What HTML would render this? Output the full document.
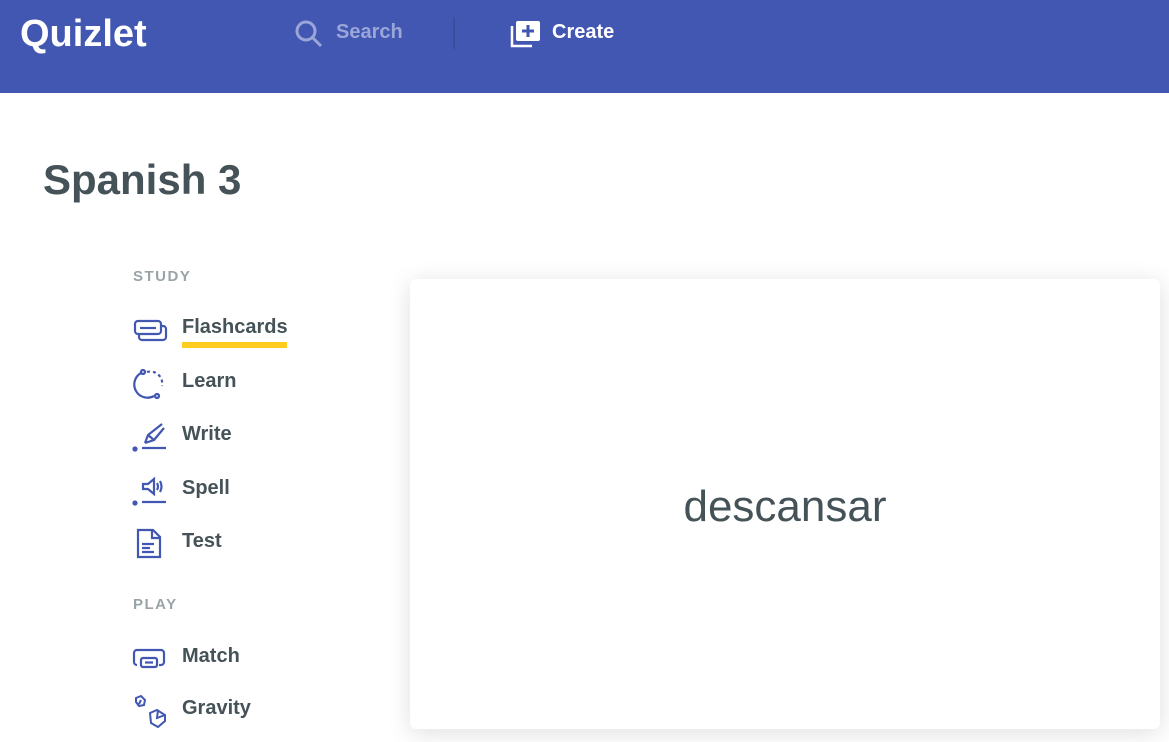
<!DOCTYPE html>
<html><head><meta charset="utf-8"><style>
*{margin:0;padding:0;box-sizing:border-box}
body{width:1169px;height:742px;overflow:hidden;background:#fff;font-family:"Liberation Sans",sans-serif;position:relative}
.hdr{position:absolute;left:0;top:0;width:1169px;height:93px;background:#4257b2}
.logo{position:absolute;left:20px;top:13px;color:#fff;font-weight:bold;font-size:38px;letter-spacing:0px}
.search{position:absolute;left:336px;top:21px;color:#9aa6d8;font-size:20px;font-weight:bold}
.div{position:absolute;left:453px;top:17px;width:2px;height:32px;background:#3a4d9f}
.create{position:absolute;left:552px;top:21px;color:#fff;font-size:20px;font-weight:bold}
h1{position:absolute;left:43px;top:156px;font-size:42px;color:#455358;font-weight:bold}
.sec{position:absolute;left:133px;font-size:15px;font-weight:bold;letter-spacing:1.5px;color:#99a3a8}
.item{position:absolute;left:182px;font-size:20px;color:#455358;font-weight:bold}
.ic{position:absolute;left:132px}
.ul{position:absolute;left:182px;top:342px;width:105px;height:6px;background:#ffcd1f}
.card{position:absolute;left:410px;top:279px;width:750px;height:450px;background:#fff;border-radius:6px;box-shadow:0 4px 24px rgba(0,0,0,0.13)}
.word{position:absolute;left:410px;width:750px;top:482px;text-align:center;font-size:44px;color:#455358}
</style></head><body>
<div class="hdr">
<div class="logo">Quizlet</div>
<svg style="position:absolute;left:294px;top:19px" width="30" height="30" viewBox="0 0 30 30" fill="none" stroke="#9aa6d8" stroke-width="3"><circle cx="12" cy="12" r="9"/><path d="M18.5 18.5L27 27"/></svg>
<div class="search">Search</div>
<div class="div"></div>
<svg style="position:absolute;left:510px;top:20px" width="32" height="28" viewBox="0 0 32 28"><path d="M2 6v20h20" fill="none" stroke="#fff" stroke-width="2.5"/><rect x="6" y="1" width="24" height="20" rx="2" fill="#fff"/><path d="M18 5v12M12 11h12" stroke="#4257b2" stroke-width="3"/></svg>
<div class="create">Create</div>
</div>
<h1>Spanish 3</h1>
<div class="sec" style="top:268px">STUDY</div>
<div class="sec" style="top:596px">PLAY</div>
<svg class="ic" style="top:316px" width="36" height="28" viewBox="0 0 36 28" fill="none" stroke="#4257b2" stroke-width="2.2"><rect x="3" y="5" width="26" height="13" rx="3"/><path d="M7 18v3a3 3 0 0 0 3 3h21a3 3 0 0 0 3-3v-8a3 3 0 0 0-3-3h-2"/><path d="M8 12h16"/></svg>
<div class="item" style="top:316px">Flashcards</div><div class="ul"></div>
<svg class="ic" style="top:368px" width="36" height="32" viewBox="0 0 36 32" fill="none" stroke="#4257b2" stroke-width="2.2"><path d="M9 5A12 12 0 0 0 22 28"/><path d="M15 4A12 12 0 0 1 30 18" stroke-dasharray="3 3"/><circle cx="11" cy="4" r="2"/><circle cx="25" cy="28" r="2"/></svg>
<div class="item" style="top:370px">Learn</div>
<svg class="ic" style="top:420px" width="36" height="34" viewBox="0 0 36 34" fill="none" stroke="#4257b2" stroke-width="2.2"><path d="M10 28h24"/><circle cx="3" cy="29" r="1.5" fill="#4257b2"/><path d="M13 23l3-8 14-11M13 23l9-3 10-12M16 15l6 5"/></svg>
<div class="item" style="top:423px">Write</div>
<svg class="ic" style="top:474px" width="36" height="34" viewBox="0 0 36 34" fill="none" stroke="#4257b2" stroke-width="2.2"><path d="M10 28h24"/><circle cx="3" cy="29" r="1.5" fill="#4257b2"/><path d="M11 10h5l6-5v15l-6-5h-5zM25 9q2 3.5 0 7M28 7q3 5.5 0 11"/></svg>
<div class="item" style="top:477px">Spell</div>
<svg class="ic" style="top:528px" width="36" height="32" viewBox="0 0 36 32" fill="none" stroke="#4257b2" stroke-width="2.2"><path d="M6 2h15l7 7v20H6zM20 2v8h8M10 16h12M10 20h8M10 24h12"/></svg>
<div class="item" style="top:530px">Test</div>
<svg class="ic" style="top:645px" width="36" height="28" viewBox="0 0 36 28" fill="none" stroke="#4257b2" stroke-width="2.2"><path d="M5 20a3 3 0 0 1-3-3V8a3 3 0 0 1 3-3h24a3 3 0 0 1 3 3v9a3 3 0 0 1-3 3h-2"/><rect x="9" y="13" width="16" height="9" rx="2"/><path d="M13 17.5h8"/></svg>
<div class="item" style="top:645px">Match</div>
<svg class="ic" style="top:694px" width="36" height="36" viewBox="0 0 36 36" fill="none" stroke="#4257b2" stroke-width="2"><path d="M4 4l5-2 4 4-1 5-5 1-3-4zM9 6l-2 4"/><path d="M18 19l7-3 8 5v6l-7 6-7-4zM26 16l-1 8 8-3"/></svg>
<div class="item" style="top:697px">Gravity</div>
<div class="card"></div>
<div class="word">descansar</div>
</body></html>
